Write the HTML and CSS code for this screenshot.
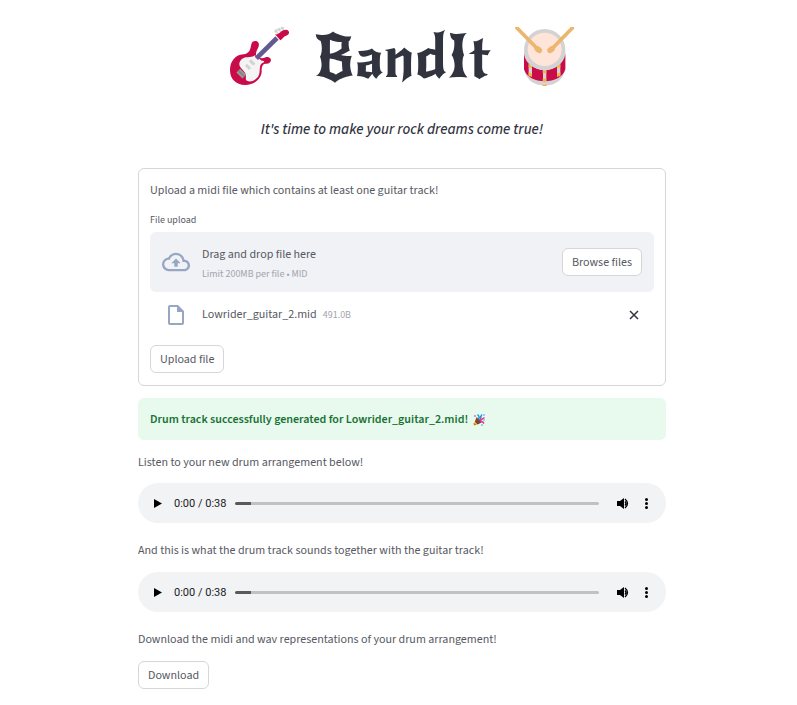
FILE: index.html
```html
<!DOCTYPE html>
<html lang="en">
<head>
<meta charset="utf-8">
<meta name="viewport" content="width=device-width, initial-scale=1">
<title>BandIt</title>
<link rel="stylesheet" href="styles.css">
</head>
<body>
<main class="page">
  <h1 class="title">
    <svg class="title-icon" viewBox="27 36 180 180" aria-hidden="true">
      <g fill="#d3d3d3"><circle cx="168" cy="48" r="5"/><circle cx="177" cy="43" r="5"/><circle cx="187" cy="39" r="5"/></g>
      <path d="M168 48l8 10M177 43l7 10M187 39l5 10" stroke="#d3d3d3" stroke-width="4"/>
      <path d="M94 88C96 78 104 76 111 79C118 83 118 91 114 99C110 107 106 116 109 123C116 131 129 131 137 127C144 124 153 128 153 136C152 144 145 147 137 146C127 145 125 157 125 169C125 190 104 210 75 210C48 210 30 192 30 166C30 138 47 119 70 118C88 117 91 104 94 88Z" fill="#ca0b4a"/>
      <path d="M61 137C73 120 93 132 105 121L125 137C136 137 134 141 127 144C115 150 123 171 115 184C105 199 86 203 79 196C75 190 81 184 75 173C68 162 51 154 61 137Z" fill="#f4f4f4"/>
      <path d="M109 130L171 69" stroke="#635994" stroke-width="14"/>
      <path d="M165 58C178 61 181 44 198 44C209 45 211 58 199 62C190 64 189 71 181 76Z" fill="#ca0b4a"/>
      <path d="M90 136l13 13M78 149l12 13" stroke="#d3d3d3" stroke-width="9"/>
      <path d="M55 167l18 18" stroke="#9b9b9b" stroke-width="16"/>
      <path d="M55 167l18 18" stroke="#858585" stroke-width="6"/>
    </svg>
    <span>BandIt</span>
    <svg class="title-icon" viewBox="30 36 180 180" aria-hidden="true">
      <path d="M57 107V160C62 194 86 212 119 212S176 194 181 160V107Z" fill="#d3d3d3"/>
      <path d="M57 117C62 148 88 164 119 164S176 148 181 117V163C174 187 148 199 119 199S64 187 57 163Z" fill="#ca0b4a"/>
      <path d="M76 148V184M119 162V199M161 148V184" stroke="#d3d3d3" stroke-width="10"/>
      <g fill="#ffb02e"><path d="M71 148l9 5v6l-9-3zM113 167h11v7h-11zM157 153l9-5v8l-9 3zM71 172l10 5v9l-10-5zM113 191h11v7h-11zM156 177l10-5v9l-10 5zM113 209h12v4h-12z"/></g>
      <ellipse cx="119" cy="104" rx="62" ry="62" fill="#d3d3d3"/>
      <ellipse cx="119" cy="103" rx="51" ry="50" fill="#ffe4d9"/>
      <g fill="#ebb66d" stroke="#ebb66d" stroke-linecap="round"><path d="M36 39L94 98M202 39L144 98" stroke-width="11"/><ellipse cx="100" cy="104" rx="12" ry="9" transform="rotate(35 100 104)" stroke="none"/><ellipse cx="138" cy="104" rx="12" ry="9" transform="rotate(-35 138 104)" stroke="none"/></g>
    </svg>
  </h1>
  <p class="tagline">It's time to make your rock dreams come true!</p>

  <form class="card">
    <p class="text">Upload a midi file which contains at least one guitar track!</p>
    <span class="label" id="upload-label">File upload</span>
    <section class="dropzone" aria-labelledby="upload-label">
      <svg class="cloud" viewBox="0 0 24 24" aria-hidden="true"><path fill="currentColor" d="M19.35 10.04A7.49 7.49 0 0 0 12 4C9.11 4 6.6 5.64 5.35 8.04A5.994 5.994 0 0 0 0 14c0 3.31 2.69 6 6 6h13c2.76 0 5-2.24 5-5 0-2.64-2.05-4.78-4.65-4.96zM19 18H6c-2.21 0-4-1.79-4-4s1.79-4 4-4h.71C7.37 7.69 9.48 6 12 6c3.04 0 5.5 2.46 5.5 5.5v.5H19c1.66 0 3 1.34 3 3s-1.34 3-3 3zM8 13h2.55v3h2.9v-3H16l-4-4z"/></svg>
      <div class="grow drop-text">
        <div class="text">Drag and drop file here</div>
        <div class="hint">Limit 200MB per file • MID</div>
      </div>
      <button class="button" type="button">Browse files</button>
    </section>
    <div class="file">
      <svg class="doc" viewBox="3 2 18 20" aria-hidden="true"><path fill="currentColor" d="M14 2H6c-1.100 0-2 .9-2 2v16c0 1.100.89 2 1.990 2H18c1.100 0 2-.9 2-2V8l-6-6zM6 20V4h7v5h5v11H6z"/></svg>
      <div class="grow file-name"><span class="text">Lowrider_guitar_2.mid</span><small class="size">491.0B</small></div>
      <button class="remove" type="button" aria-label="Remove file"><svg viewBox="0 0 10 10" aria-hidden="true"><path d="M1 1l8 8M9 1L1 9" stroke="currentColor" stroke-width="1.500"/></svg></button>
    </div>
    <button class="button" type="button">Upload file</button>
  </form>

  <div class="alert" role="status">
    <strong>Drum track successfully generated for Lowrider_guitar_2.mid!</strong>
    <svg class="party" viewBox="0 0 24 24" aria-hidden="true">
      <path d="M7 7L1 21c-.5 1.500.5 2.500 2 2l14-6z" fill="#ffb02e"/>
      <path d="M7 7l-3 8 5 6 8-4C15 12 12 8 7 7z" fill="#7d4533"/>
      <path d="M5 14l5 6M2 19l3 3" stroke="#6d4534" stroke-width="2"/>
      <path d="M10 10C14 8 12 4 9 1M13 12C17 10 14 5 18 1" fill="none" stroke="#00a6ed" stroke-width="3"/>
      <path d="M14 14C16 9 19 11 23 7M15 16c3-2 5 0 7 3" fill="none" stroke="#f92f80" stroke-width="3"/>
      <path d="M8 7l3 4M14 4l2 2" stroke="#f92f80" stroke-width="2"/>
      <g fill="#00a6ed"><circle cx="22" cy="12" r="1.500"/><circle cx="18" cy="22" r="1.500"/></g><circle cx="4" cy="4" r="1.500" fill="#ca0b4a"/><circle cx="22" cy="2" r="1.500" fill="#8d65c5"/>
    </svg>
  </div>

  <p class="text intro">Listen to your new drum arrangement below!</p>
  <div class="player" role="group" aria-label="Drum track">
    <button class="control" type="button" aria-label="Play"><svg viewBox="0 0 16 16"><path d="M4 4l8 4.500-8 4.500z"/></svg></button>
    <span class="time">0:00 / 0:38</span>
    <input class="seek" type="range" min="0" max="38" value="0" aria-label="Seek">
    <button class="control volume" type="button" aria-label="Mute"><svg viewBox="0 0 16 16"><path d="M3 6h3l4-3v11l-4-3H3z"/><path d="M11 6.500q2 2 0 4M11 4q5 4.500 0 9" fill="none" stroke="currentColor" stroke-width="1.300"/></svg></button>
    <button class="control" type="button" aria-label="More options"><svg viewBox="0 0 16 16"><circle cx="8.500" cy="4.500" r="1.500"/><circle cx="8.500" cy="8.500" r="1.500"/><circle cx="8.500" cy="12.500" r="1.500"/></svg></button>
  </div>

  <p class="text next">And this is what the drum track sounds together with the guitar track!</p>
  <div class="player" role="group" aria-label="Drum and guitar track">
    <button class="control" type="button" aria-label="Play"><svg viewBox="0 0 16 16"><path d="M4 4l8 4.500-8 4.500z"/></svg></button>
    <span class="time">0:00 / 0:38</span>
    <input class="seek" type="range" min="0" max="38" value="0" aria-label="Seek">
    <button class="control volume" type="button" aria-label="Mute"><svg viewBox="0 0 16 16"><path d="M3 6h3l4-3v11l-4-3H3z"/><path d="M11 6.500q2 2 0 4M11 4q5 4.500 0 9" fill="none" stroke="currentColor" stroke-width="1.300"/></svg></button>
    <button class="control" type="button" aria-label="More options"><svg viewBox="0 0 16 16"><circle cx="8.500" cy="4.500" r="1.500"/><circle cx="8.500" cy="8.500" r="1.500"/><circle cx="8.500" cy="12.500" r="1.500"/></svg></button>
  </div>

  <p class="text next">Download the midi and wav representations of your drum arrangement!</p>
  <button class="button" type="button">Download</button>
</main>
</body>
</html>
```
FILE: styles.css
```css
* { box-sizing: border-box; }
body {
  margin: 0;
  padding: 25px 16px 16px 23px;
  background: #fff;
  color: #31333f;
  font: 12px/22px "Source Sans 3", "Noto Sans CJK SC", sans-serif;
}
p { margin: 0; }
strong { font-weight: 600; }
svg { display: block; flex: none; }
button { font: inherit; color: inherit; cursor: pointer; }
.page { max-width: 528px; margin: 0 auto; }
.title {
  display: flex;
  align-items: center;
  justify-content: center;
  gap: 25px;
  margin: 0;
  font: 60px/64px "New Rocker", "Liberation Serif", serif;
}
.title-icon { width: 60px; height: 60px; }
.tagline {
  margin: 29px 0 26px;
  text-align: center;
  font-size: 15px;
  font-weight: 500;
  line-height: 24px;
  font-style: italic;
}
.text { color: #575963; }
.card {
  padding: 11px 11px 12px;
  border: 1px solid #d6d6d9;
  border-radius: 6px;
}
.label { display: block; margin: 9px 0 3px; font-size: 10px; line-height: 18px; color: #575963; }
.dropzone {
  display: flex;
  align-items: center;
  gap: 12px;
  min-height: 60px;
  padding: 0 12px;
  background: #f0f2f6;
  border-radius: 6px;
}
.cloud { width: 28px; height: 28px; color: #97a6c3; }
.grow { flex: 1; min-width: 0; }
.drop-text { padding-top: 2px; }
.hint { font-size: 10px; line-height: 16px; color: #a3a4ac; }
.button {
  height: 28px;
  padding: 2px 9px 0;
  background: #fff;
  border: 1px solid #d6d6d9;
  border-radius: 6px;
  line-height: 20px;
  color: #575963;
}
.file { display: flex; align-items: center; gap: 16px; height: 45px; padding: 0 12px 0 16px; margin-bottom: 8px; }
.doc { width: 20px; height: 20px; color: #97a6c3; }
.file-name { display: flex; align-items: center; gap: 6px; }
.size { font-size: 10px; color: #a3a4ac; }
.remove { width: 16px; height: 16px; padding: 3px; border: 0; background: none; }
.remove svg { width: 10px; height: 10px; }
.alert {
  display: flex;
  align-items: center;
  gap: 5px;
  margin: 12px 0;
  padding: 11px 12px 9px;
  background: #e8f9ee;
  border-radius: 6px;
  color: #177233;
}
.party { width: 12px; height: 12px; }
.intro { margin-bottom: 9px; }
.next { margin: 17px 0 10px; }
.player {
  display: flex;
  align-items: center;
  height: 40px;
  padding: 0 12px;
  border-radius: 20px;
  background: #f1f3f4;
  color: #000;
}
.control { width: 16px; height: 16px; padding: 0; border: 0; background: none; }
.control svg { width: 16px; height: 16px; fill: currentColor; }
.time { margin: 0 9px 0 8px; padding-top: 2px; font: 11px/20px Roboto, sans-serif; color: #202124; white-space: nowrap; }
.seek {
  flex: 1;
  min-width: 0;
  height: 3px;
  margin: 0 15px 0 0;
  appearance: none;
  border-radius: 2px;
  background: linear-gradient(to right, #5a5a5a 16px, #c1c1c1 16px);
}
.seek::-webkit-slider-thumb { appearance: none; width: 1px; height: 1px; background: transparent; }
.volume { margin-right: 8px; }
```
